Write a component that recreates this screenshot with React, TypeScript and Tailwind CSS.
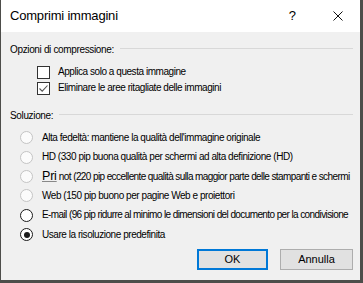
import React from "react";

const font = { fontFamily: '"Liberation Sans", Arial, sans-serif' };

function Checkbox({ checked, label }: { checked?: boolean; label: string }) {
  return (
    <div className="flex items-center h-[16px]">
      <div className="shrink-0 ml-[36px] w-[13px] h-[13px] border border-[#333333] bg-white flex items-center justify-center">
        {checked && (
          <svg width="11" height="11" viewBox="0 0 11 11">
            <path d="M1.5 5.5 L4.2 8.2 L9.5 2.5" stroke="#555555" strokeWidth="1.1" fill="none" />
          </svg>
        )}
      </div>
      <span className="ml-[8px] text-[10px] tracking-[-0.45px] text-black leading-none whitespace-nowrap">{label}</span>
    </div>
  );
}

function Radio({ state, tight, children }: { state: "disabled" | "on" | "off"; tight?: boolean; children: React.ReactNode }) {
  const ring =
    state === "disabled"
      ? "border-[#c4c4c4] bg-[#fbfbfb]"
      : "border-[#1a1a1a] bg-white";
  return (
    <div className="flex items-center h-[19.4px]">
      <div className={`shrink-0 ml-[19px] w-[13px] h-[13px] rounded-full border-[1.3px] ${ring} flex items-center justify-center`}>
        {state === "on" && <div className="w-[6px] h-[6px] rounded-full bg-[#1a1a1a]" />}
      </div>
      <span
        className={`ml-[9px] text-[10px] ${tight ? "tracking-[-0.6px]" : "tracking-[-0.45px]"} text-black leading-none whitespace-nowrap`}
      >
        {children}
      </span>
    </div>
  );
}

function Header({ label }: { label: string }) {
  return (
    <div className="flex items-center h-[14px] pl-[9px] pr-[7px]">
      <span className="text-[10px] tracking-[-0.35px] text-black leading-none whitespace-nowrap">{label}</span>
      <div className="flex-1 ml-[6px] h-px bg-[#d8d8d8] -mt-[4px]" />
    </div>
  );
}

export default function App() {
  return (
    <div className="w-[363px] h-[283px] bg-[#4d4d4a] pl-px overflow-hidden" style={font}>
      <div className="w-[359px] h-[280px] bg-[#f0f0f0] flex flex-col">
        <div className="h-[32px] bg-white flex items-center shrink-0">
          <span className="ml-[9px] text-[13px] tracking-[-0.2px] text-black">Comprimi immagini</span>
          <span className="ml-auto text-[13px] text-black">?</span>
          <svg className="ml-[37px] mr-[17px]" width="10" height="10" viewBox="0 0 10 10">
            <path d="M0.5 0.5 L9.5 9.5 M9.5 0.5 L0.5 9.5" stroke="#111" strokeWidth="1" />
          </svg>
        </div>
        <div className="mt-[11px]">
          <Header label="Opzioni di compressione:" />
        </div>
        <div className="mt-[7px] flex flex-col">
          <Checkbox label="Applica solo a questa immagine" />
          <Checkbox checked label="Eliminare le aree ritagliate delle immagini" />
        </div>
        <div className="mt-[13px]">
          <Header label="Soluzione:" />
        </div>
        <div className="mt-[5px] flex flex-col">
          <Radio state="disabled">Alta fedeltà: mantiene la qualità dell'immagine originale</Radio>
          <Radio state="disabled">HD (330 pip buona qualità per schermi ad alta definizione (HD)</Radio>
          <Radio state="disabled" tight>
            <span className="text-[12.5px] tracking-[-0.2px] underline decoration-[#888] underline-offset-1">Pri</span>
            <span> not (220 pip eccellente qualità sulla maggior parte delle stampanti e schermi</span>
          </Radio>
          <Radio state="disabled">Web (150 pip buono per pagine Web e proiettori</Radio>
          <Radio state="off" tight>E-mail (96 pip ridurre al minimo le dimensioni del documento per la condivisione</Radio>
          <Radio state="on">Usare la risoluzione predefinita</Radio>
        </div>
        <div className="mt-auto mb-[10px] flex justify-end pr-[7px] gap-[12px]">
          <button className="w-[71px] h-[21px] bg-[#e1e1e1] border-2 border-[#0078d7] text-[11px] text-black">OK</button>
          <button className="w-[73px] h-[21px] bg-[#e1e1e1] border border-[#adadad] text-[11px] text-black">Annulla</button>
        </div>
      </div>
    </div>
  );
}
